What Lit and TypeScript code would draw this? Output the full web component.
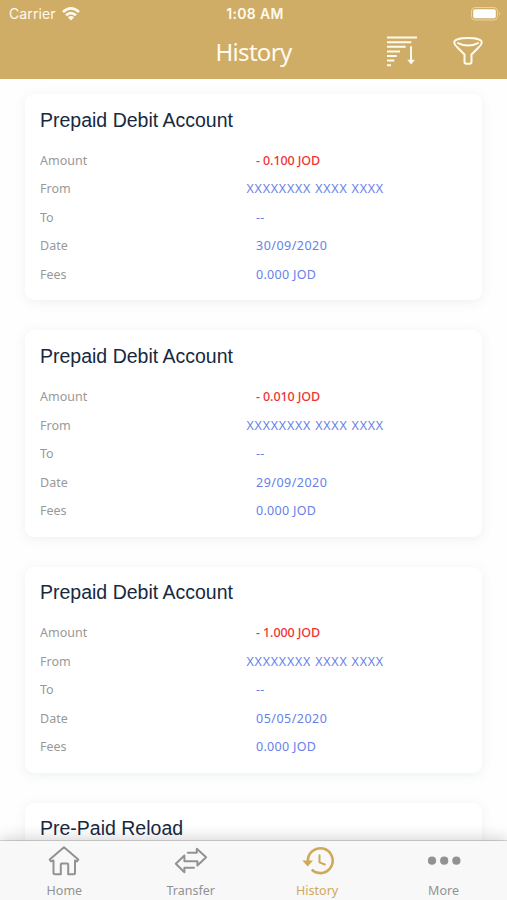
import { LitElement, html, css, svg, nothing } from "lit";
import { customElement, property } from "lit/decorators.js";

interface Entry {
  title: string;
  amount?: string;
  date?: string;
}

const entries: Entry[] = [
  { title: "Prepaid Debit Account", amount: "- 0.100 JOD", date: "30/09/2020" },
  { title: "Prepaid Debit Account", amount: "- 0.010 JOD", date: "29/09/2020" },
  { title: "Prepaid Debit Account", amount: "- 1.000 JOD", date: "05/05/2020" },
  { title: "Pre-Paid Reload" },
];

@customElement("history-card")
class HistoryCard extends LitElement {
  @property({ attribute: false }) entry!: Entry;

  static styles = css`
    :host {
      display: block;
      flex: none;
      box-sizing: border-box;
      height: 206.3px;
      padding: 10.5px 15px 0;
      border-radius: 9px;
      background: #fff;
      box-shadow: 0 2px 12px rgba(60, 90, 100, 0.085);
      font: 12.5px/28.5px "Noto Sans", sans-serif;
      color: #999;
    }
    .title {
      height: 30px;
      margin-bottom: 12.4px;
      font: 19.5px/30px "Liberation Sans", sans-serif;
      color: #17293f;
      white-space: nowrap;
    }
    .row {
      display: grid;
      grid-template-columns: 216px 1fr;
      height: 28.5px;
      white-space: nowrap;
    }
    .row.wide {
      grid-template-columns: 206.5px 1fr;
    }
    .value {
      color: #6781ea;
      letter-spacing: 0.3px;
    }
    .date {
      letter-spacing: 0.48px;
    }
    .amount {
      color: #f03434;
      font-weight: 500;
      letter-spacing: -0.1px;
    }
    .account {
      letter-spacing: 0.76px;
    }
  `;

  render() {
    const e = this.entry;
    return html`
      <div class="title">${e.title}</div>
      ${e.amount
        ? html`
            <div class="row"><span>Amount</span><span class="amount">${e.amount}</span></div>
            <div class="row wide"><span>From</span><span class="value account">XXXXXXXX XXXX XXXX</span></div>
            <div class="row"><span>To</span><span class="value">--</span></div>
            <div class="row"><span>Date</span><span class="value date">${e.date}</span></div>
            <div class="row"><span>Fees</span><span class="value">0.000 JOD</span></div>
          `
        : nothing}
    `;
  }
}

const tabs = [
  {
    label: "Home",
    icon: svg`<path d="M2.700 14.500 17 2.200l14.300 12.300-1.300 1.900-2-.900v12.200q0 1.500-1.500 1.500h-5.300V19.500q0-1-1-1h-5.400q-1 0-1 1v9.700H8q-1.500 0-1.500-1.500V15.500l-2.500.900Z"/>`,
  },
  {
    label: "Transfer",
    icon: svg`<path d="M13.800 7.800h9v-4l9.300 8.400-8.700 8.300v-4.300h-13v-5.700L1.800 18.800l8.600 8.400v-4.400H20"/>`,
  },
  {
    label: "History",
    icon: svg`<path class="ring" d="M7.900 16A12.400 12.400 0 1 1 11.700 24.600"/><path class="solid" d="M2.300 15.500h10.700L7.700 21.500Z"/><path d="M19.500 10.300v7l5.300 2.200"/>`,
  },
  {
    label: "More",
    icon: svg`<g class="solid"><circle cx="5" cy="15.700" r="4.100"/><circle cx="17.200" cy="15.700" r="4.100"/><circle cx="29.400" cy="15.700" r="4.100"/></g>`,
  },
];

@customElement("app-root")
class AppRoot extends LitElement {
  static styles = css`
    :host {
      display: flex;
      flex-direction: column;
      width: 507px;
      height: 900px;
      overflow: hidden;
      background: #fefefe;
      font-family: "Noto Sans", sans-serif;
    }
    header {
      flex: none;
      height: 79px;
      background: #cfad67;
      color: #fffaf0;
    }
    .status {
      display: grid;
      grid-template-columns: 1fr auto 1fr;
      align-items: center;
      height: 27px;
      padding: 0 6px 0 9px;
      font: 14px/27px Inter, sans-serif;
    }
    .carrier {
      display: flex;
      align-items: center;
      gap: 6px;
      letter-spacing: 0.1px;
    }
    .clock {
      font-weight: 600;
      letter-spacing: 0.3px;
    }
    .battery {
      justify-self: end;
    }
    .bar {
      display: grid;
      grid-template-columns: 1fr auto 1fr;
      height: 49px;
      align-items: center;
    }
    h1 {
      grid-column: 2;
      margin: 0;
      font: 400 24px/49px "Noto Sans", sans-serif;
      letter-spacing: -0.7px;
    }
    .actions {
      display: flex;
      justify-content: flex-end;
      gap: 35.500px;
      padding-right: 24.500px;
    }
    svg {
      display: block;
      overflow: visible;
      flex: none;
    }
    .line {
      fill: none;
      stroke: currentColor;
      stroke-width: 2;
      stroke-linejoin: round;
      stroke-linecap: round;
    }
    .bars {
      stroke-linecap: butt;
    }
    .solid {
      fill: currentColor;
      stroke: none;
    }
    main {
      flex: 1;
      min-height: 0;
      overflow: hidden;
      display: flex;
      flex-direction: column;
      gap: 30px;
      padding: 15px 25px 0;
    }
    nav {
      flex: none;
      position: relative;
      display: grid;
      grid-template-columns: repeat(4, 126.400px);
      padding-left: 1.200px;
      height: 59.500px;
      background: #f8f8f8;
      box-shadow: 0 -1px 0 rgba(0, 0, 0, 0.14), 0 -3px 14px rgba(0, 0, 0, 0.17);
    }
    .tab {
      display: flex;
      flex-direction: column;
      align-items: center;
      padding-top: 4px;
      color: #929292;
      font-size: 12.500px;
      line-height: 18px;
    }
    .tab.active {
      color: #cfa859;
    }
    .tab svg {
      margin-bottom: 5px;
    }
    .ring {
      stroke-width: 2.600;
      stroke-linecap: butt;
    }
  `;

  render() {
    return html`
      <header>
        <div class="status">
          <div class="carrier">
            Carrier
            <svg width="18" height="14" viewBox="0 0 18 14" fill="none" stroke="currentColor" stroke-width="2.7">
              <path d="M1 5Q9-2.200 17 5"/><path d="M4 8.300Q9 3.800 14 8.300"/>
              <path class="solid" d="M5.900 10.200Q9 7.800 12.100 10.200L9 13.600Z"/>
            </svg>
          </div>
          <div class="clock">1:08 AM</div>
          <svg class="battery" width="30" height="14" viewBox="0 0 30 14">
            <rect x=".5" y=".5" width="26" height="12.500" rx="3.500" fill="none" stroke="#e8d3a8"/>
            <rect x="2.200" y="2.200" width="22.600" height="9.100" rx="1.800" fill="#fff"/>
            <path d="M28 4.700q2 2 0 4Z" fill="#e8d3a8"/>
          </svg>
        </div>
        <div class="bar">
          <h1>History</h1>
          <div class="actions">
            <svg width="30" height="31" viewBox="0 0 30 31">
              <path class="line bars" d="M0 1.600h30M0 6.200h24.300M0 10.800h18.700M0 15.400h13M0 20h9.700M0 24.600h7.300M0 29.200h4"/>
              <path class="line" d="M24 11v14"/>
              <path class="solid" d="M20.300 23.800h7.600l-3.800 4.800Z"/>
            </svg>
            <svg class="line" width="30" height="30" viewBox="0 0 30 30">
              <path d="M1.200 6.500C1.200.5 28.800.5 28.800 6.500Q28.500 9 25.500 11.500L18.500 18.500V26q0 1.800-1.800 1.800h-3.400q-1.800 0-1.800-1.800V18.500L4.500 11.500Q1.500 9 1.200 6.500Z"/>
              <path d="M5 7.200Q15 12 25 7.200"/>
            </svg>
          </div>
        </div>
      </header>
      <main>${entries.map((e) => html`<history-card .entry=${e}></history-card>`)}</main>
      <nav>
        ${tabs.map(
          (t) => html`<div class="tab ${t.label === "History" ? "active" : ""}">
            <svg class="line" width="34" height="32" viewBox="0 0 34 32">${t.icon}</svg>
            <span>${t.label}</span>
          </div>`
        )}
      </nav>
    `;
  }
}
